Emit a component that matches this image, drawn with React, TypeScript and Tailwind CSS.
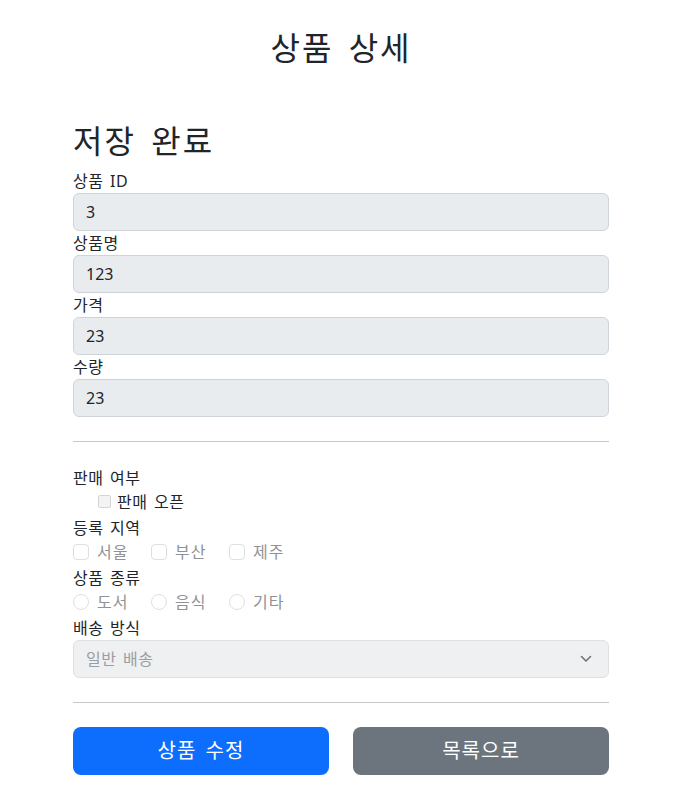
import React from 'react'

const font = {
  fontFamily: '"Noto Sans", "Noto Sans CJK KR", sans-serif',
}

function Field({ label, value }: { label: string; value: string }) {
  return (
    <div>
      <label className="block text-base leading-6 tracking-[0.5px] [word-spacing:2px]">{label}</label>
      <div className="flex h-[38px] items-center rounded-md border border-[#ced4da] bg-[#e9ecef] px-3 text-base leading-6 text-[#212529]">
        {value}
      </div>
    </div>
  )
}

function Check({ text, round }: { text: string; round?: boolean }) {
  return (
    <div className="flex h-6 w-[78px] items-center">
      <span
        className={
          round
            ? 'h-4 w-4 shrink-0 rounded-full border border-[#dfdfdf] bg-white'
            : 'h-4 w-4 shrink-0 rounded-[4px] border border-[#dfdfdf] bg-white'
        }
      />
      <span className="ml-2 text-base leading-6 tracking-[1px] text-[#909294]">{text}</span>
    </div>
  )
}

export default function App() {
  return (
    <div className="w-[682px] bg-white text-[#212529]" style={font}>
      <div className="mx-auto max-w-[560px] px-3 pb-[22px]">
        {/* header */}
        <div className="pt-[29px] text-center">
          <h2 className="text-[32px] leading-[1.2] font-normal tracking-[2px] [word-spacing:5px]">상품 상세</h2>
        </div>

        <h2 className="mt-[55px] mb-2 text-[32px] leading-[1.2] font-normal tracking-[2px] [word-spacing:5px]">저장 완료</h2>

        <Field label="상품 ID" value="3" />
        <Field label="상품명" value="123" />
        <Field label="가격" value="23" />
        <Field label="수량" value="23" />

        <hr className="my-6 border-t border-[#c8c9cb]" />

        <div className="text-base leading-6 tracking-[0.5px] [word-spacing:2px]">판매 여부</div>
        <div className="mb-0.5 flex h-6 items-center pl-[25px]">
          <span className="h-[13px] w-[13px] rounded-[2px] border border-[#d5d5d5] bg-[#f3f3f3]" />
          <span className="ml-[6px] text-base leading-6 tracking-[0.5px] [word-spacing:2px]">판매 오픈</span>
        </div>

        <div className="text-base leading-6 tracking-[0.5px] [word-spacing:2px]">등록 지역</div>
        <div className="mb-0.5 flex">
          <Check text="서울" />
          <Check text="부산" />
          <Check text="제주" />
        </div>

        <div className="text-base leading-6 tracking-[0.5px] [word-spacing:2px]">상품 종류</div>
        <div className="mb-0.5 flex">
          <Check text="도서" round />
          <Check text="음식" round />
          <Check text="기타" round />
        </div>

        <div className="text-base leading-6 tracking-[0.5px] [word-spacing:2px]">배송 방식</div>
        <div className="flex h-[38px] items-center justify-between rounded-md border border-[#dee0e3] bg-[#eff0f2] pr-4 pl-3">
          <span className="text-base leading-6 tracking-[0.5px] text-[#9a9ea2] [word-spacing:2px]">일반 배송</span>
          <svg width="12" height="8" viewBox="0 0 12 8" fill="none">
            <path d="M1.5 1.5l4.5 4.5 4.5-4.5" stroke="#6c7075" strokeWidth="1.5" strokeLinecap="round" strokeLinejoin="round" />
          </svg>
        </div>

        <hr className="my-6 border-t border-[#c8c9cb]" />

        <div className="grid grid-cols-2 gap-6">
          <button className="h-12 rounded-lg bg-[#0d6efd] text-xl leading-[1.5] tracking-[1px] text-white [word-spacing:3px]">상품 수정</button>
          <button className="h-12 rounded-lg bg-[#6c757d] text-xl leading-[1.5] tracking-[1px] text-white">목록으로</button>
        </div>
      </div>
    </div>
  )
}
